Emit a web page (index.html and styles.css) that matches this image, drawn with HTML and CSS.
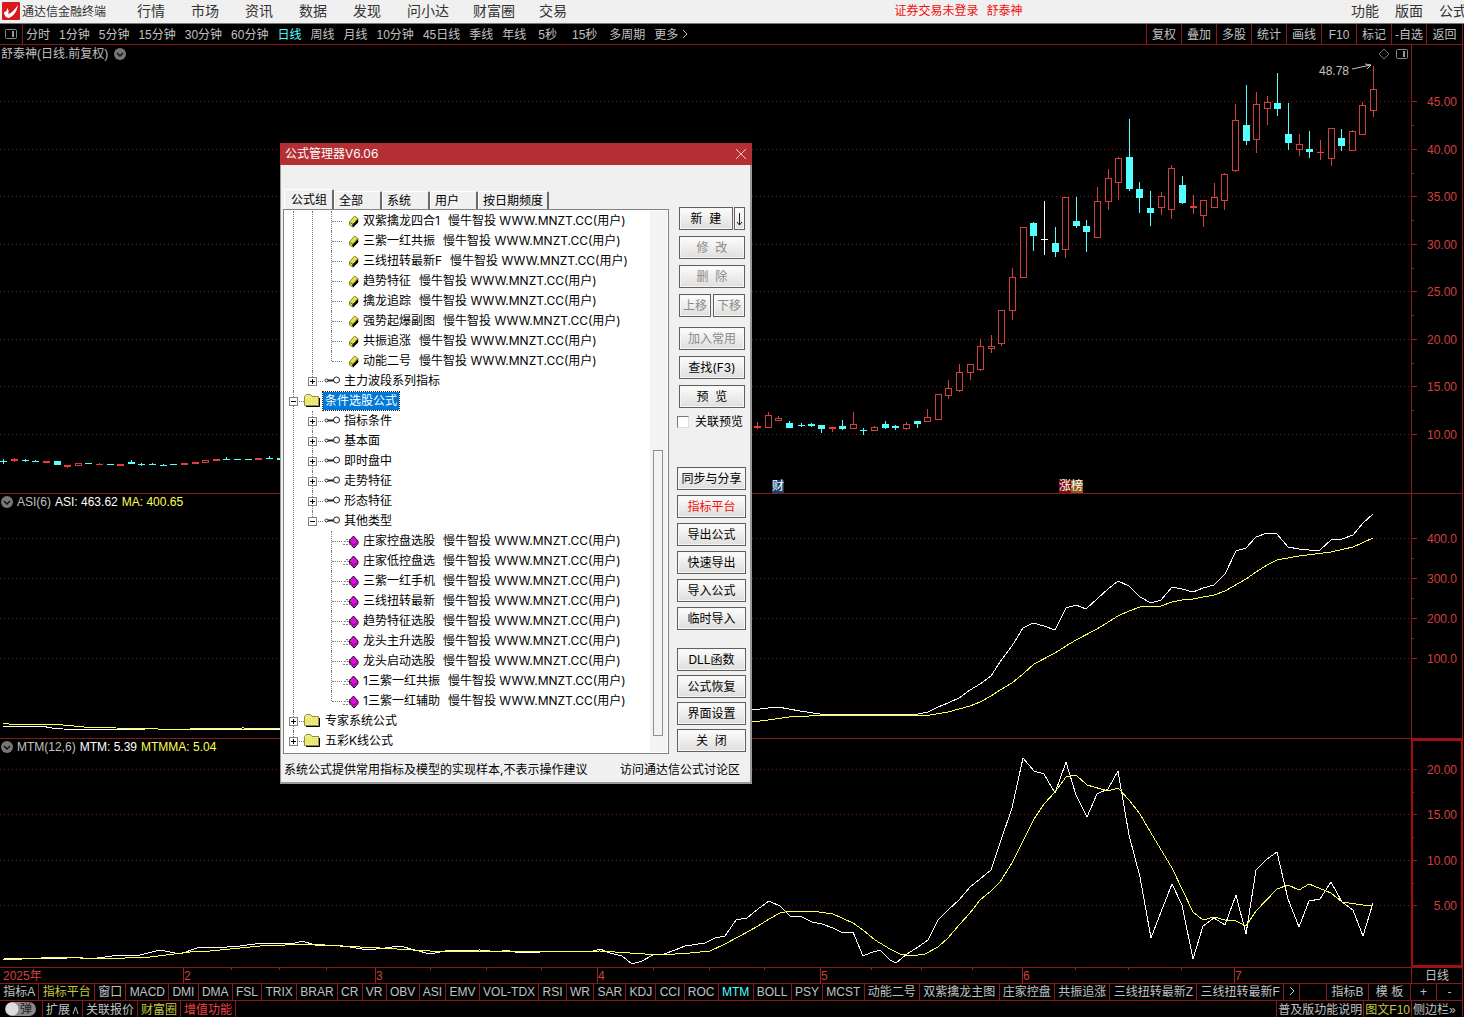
FILE: index.html
```html
<!DOCTYPE html>
<html lang="zh-CN">
<head>
  <meta charset="UTF-8">
  <meta name="viewport" content="width=device-width, initial-scale=1.0">
  <title>通达信金融终端</title>
  <link rel="stylesheet" href="styles.css">
</head>
<body>
  <svg class="symbols">
    <symbol id="i-book" viewBox="0 0 18 16">
      <path d="M7.500 9l5-6 3.500 2.500v3.500l-5 5-3.500-2z" fill="#e6e24c" stroke="#8a872f"/>
      <path d="M16 6v3.500l-5 5-1-3z" fill="#000"/>
      <path d="M8 9.500l3 2 4.500-5.500" fill="none" stroke="#6d6a20"/>
    </symbol>
    <symbol id="i-gem" viewBox="0 0 18 16">
      <path d="M4 6.500h4M2 8.500h5M1 11.500h7" stroke="#888" stroke-dasharray="2 1"/>
      <path d="M7.500 7.500l4-4.500 4.500 5v2.500l-4 4.500-4.500-5z" fill="#d413d4" stroke="#220022"/>
      <path d="M8 9l4 3 4-3" stroke="#7d087d" fill="none"/>
    </symbol>
    <symbol id="i-key" viewBox="0 0 18 16">
      <path d="M4 7.500h8" stroke="#222" stroke-width="2"/>
      <circle cx="3.500" cy="7.500" r="1.500" fill="#fff" stroke="#222"/>
      <circle cx="13.500" cy="7" r="3" fill="#fff" stroke="#222"/>
    </symbol>
    <symbol id="i-folder" viewBox="0 0 18 16">
      <path d="M2 13.500h13.500V5" stroke="#000" fill="none"/>
      <path d="M.5 12.500v-9l2-2h4l1.500 2h6.500v9z" fill="#efec84" stroke="#8f8d3f"/>
      <path d="M2 6h12M2 8h12M2 10h12" stroke="#dcd84c" stroke-dasharray="1 1"/>
    </symbol>
    <symbol id="i-chevron" viewBox="0 0 12 12">
      <circle cx="6" cy="6" r="6" fill="#777"/>
      <path d="M3 5l3 3 3-3" fill="none" stroke="#111" stroke-width="1.500"/>
    </symbol>
    <symbol id="i-panel" viewBox="0 0 12 12">
      <rect x=".5" y="1.500" width="11" height="9" rx="1" fill="none" stroke="#888"/>
      <path d="M8 3v6" stroke="#999" stroke-width="2"/>
    </symbol>
  </svg>

  <header class="menubar">
    <svg class="logo" viewBox="0 0 18 18">
      <rect width="18" height="18" rx="1" fill="#d5191d"/>
      <path d="M2 10c2 0 3-1 3-4 2 2 2 4 1 6 4-1 6-4 10-9-1 6-4 11-9 13-3 0-5-3-5-6z" fill="#fff"/>
    </svg>
    <h1>通达信金融终端</h1>
    <nav class="menu">
      <a href="#">行情</a>
      <a href="#">市场</a>
      <a href="#">资讯</a>
      <a href="#">数据</a>
      <a href="#">发现</a>
      <a href="#">问小达</a>
      <a href="#">财富圈</a>
      <a href="#">交易</a>
    </nav>
    <div class="login"><span>证券交易未登录</span><span>舒泰神</span></div>
    <nav class="menu-right">
      <a href="#">功能</a>
      <a href="#">版面</a>
      <a href="#">公式</a>
    </nav>
  </header>

  <div class="toolbar">
    <button class="side-toggle" aria-label="侧栏"><svg width="12" height="12"><use href="#i-panel"/></svg></button>
    <div class="periods">
      <button>分时</button>
      <button>1分钟</button>
      <button>5分钟</button>
      <button>15分钟</button>
      <button>30分钟</button>
      <button>60分钟</button>
      <button class="active">日线</button>
      <button>周线</button>
      <button>月线</button>
      <button>10分钟</button>
      <button>45日线</button>
      <button>季线</button>
      <button>年线</button>
      <button class="seconds">5秒</button>
      <button class="seconds">15秒</button>
      <button>多周期</button>
      <button>更多<svg class="more" viewBox="0 0 6 10"><path d="M1 1l4 4-4 4" fill="none" stroke="#c0c0c0"/></svg></button>
    </div>
    <div class="tools">
      <button>复权</button>
      <button>叠加</button>
      <button>多股</button>
      <button>统计</button>
      <button>画线</button>
      <button>F10</button>
      <button>标记</button>
      <button>-自选</button>
      <button>返回</button>
    </div>
  </div>

  <main class="workspace">
    <section class="panel">
      <div class="plot">
        <svg id="priceChart" class="chart" viewBox="0 45 1411 448" preserveAspectRatio="none"></svg>
        <div class="legend">舒泰神(日线.前复权)<svg width="12" height="12"><use href="#i-chevron"/></svg></div>
        <div class="plot-tools">
          <svg width="12" height="12" viewBox="0 0 12 12"><path d="M6 1l5 5-5 5-5-5z" fill="none" stroke="#777"/></svg>
          <svg width="12" height="12"><use href="#i-panel"/></svg>
        </div>
        <div class="high-mark">48.78<svg width="22" height="10" viewBox="0 0 22 10"><path d="M1 6l19-4M14 1l6 1-4 4" fill="none" stroke="#c0c0c0"/></svg></div>
        <span class="badge news">财</span>
        <span class="badge rank"><b>涨</b><i>榜</i></span>
      </div>
      <svg id="priceAxis" class="axis" viewBox="0 45 50 448" preserveAspectRatio="none"></svg>
    </section>

    <section class="panel divided">
      <div class="plot">
        <svg id="asiChart" class="chart" viewBox="0 494 1411 244" preserveAspectRatio="none"></svg>
        <div class="legend sub"><svg width="12" height="12"><use href="#i-chevron"/></svg><span>ASI(6)</span><span class="white">ASI: 463.62</span><span class="yellow">MA: 400.65</span></div>
      </div>
      <svg id="asiAxis" class="axis" viewBox="0 494 50 244" preserveAspectRatio="none"></svg>
    </section>

    <section class="panel divided selected">
      <div class="plot">
        <svg id="mtmChart" class="chart" viewBox="0 739 1411 228" preserveAspectRatio="none"></svg>
        <div class="legend sub"><svg width="12" height="12"><use href="#i-chevron"/></svg><span>MTM(12,6)</span><span class="white">MTM: 5.39</span><span class="yellow">MTMMA: 5.04</span></div>
      </div>
      <svg id="mtmAxis" class="axis" viewBox="0 739 50 228" preserveAspectRatio="none"></svg>
    </section>

    <div class="dates">
      <svg id="dateAxis" class="chart" viewBox="0 968 1411 15" preserveAspectRatio="none"></svg>
      <span class="period">日线</span>
    </div>

    <div class="indicators">
      <div class="tabs">
        <button>指标A</button>
        <button class="yellow">指标平台</button>
        <button>窗口</button>
        <button>MACD</button>
        <button>DMI</button>
        <button>DMA</button>
        <button>FSL</button>
        <button>TRIX</button>
        <button>BRAR</button>
        <button>CR</button>
        <button>VR</button>
        <button>OBV</button>
        <button>ASI</button>
        <button>EMV</button>
        <button>VOL-TDX</button>
        <button>RSI</button>
        <button>WR</button>
        <button>SAR</button>
        <button>KDJ</button>
        <button>CCI</button>
        <button>ROC</button>
        <button class="active">MTM</button>
        <button>BOLL</button>
        <button>PSY</button>
        <button>MCST</button>
        <button>动能二号</button>
        <button>双紫擒龙主图</button>
        <button>庄家控盘</button>
        <button>共振追涨</button>
        <button>三线扭转最新Z</button>
        <button>三线扭转最新F</button>
      </div>
      <button class="next" aria-label="更多指标"><svg class="more" viewBox="0 0 6 10"><path d="M1 1l4 4-4 4" fill="none" stroke="#c0c0c0"/></svg></button>
      <span class="blank"></span>
      <button class="wide">指标B</button>
      <button class="wide">模 板</button>
      <button class="zoom">+</button>
      <button class="zoom">-</button>
    </div>
  </main>

  <footer class="statusbar">
    <label class="popup-toggle"><input type="checkbox"><span>弹</span></label>
    <button>扩展<svg class="caret" viewBox="0 0 7 8"><path d="M1 8l2.500-7L6 8" fill="none" stroke="#c0c0c0"/></svg></button>
    <button>关联报价</button>
    <button class="yellow">财富圈</button>
    <button class="red">增值功能</button>
    <span class="spacer"></span>
    <button class="help">普及版功能说明</button>
    <button class="yellow f10">图文F10</button>
    <button class="sidebar">侧边栏»</button>
  </footer>

  <div class="dialog" role="dialog" aria-labelledby="dialogTitle">
    <div class="dialog-title">
      <span id="dialogTitle">公式管理器V6.06</span>
      <button aria-label="关闭窗口"><svg width="10" height="10" viewBox="0 0 10 10"><path d="M0 0l10 10M10 0L0 10" stroke="#f3c9ca"/></svg></button>
    </div>
    <div class="dialog-body">
      <div class="browser">
        <div class="group-tabs" role="tablist">
          <button role="tab" class="current">公式组</button>
          <button role="tab">全部</button>
          <button role="tab">系统</button>
          <button role="tab">用户</button>
          <button role="tab">按日期频度</button>
        </div>
        <div class="tree-box">
          <ul class="tree">
            <li>
              <ul>
                <li>
                  <ul>
                    <li><div class="row leaf"><svg><use href="#i-book"/></svg><span>双紫擒龙四合1</span>慢牛智投 WWW.MNZT.CC(用户)</div></li>
                    <li><div class="row leaf"><svg><use href="#i-book"/></svg><span>三紫一红共振</span>慢牛智投 WWW.MNZT.CC(用户)</div></li>
                    <li><div class="row leaf"><svg><use href="#i-book"/></svg><span>三线扭转最新F</span>慢牛智投 WWW.MNZT.CC(用户)</div></li>
                    <li><div class="row leaf"><svg><use href="#i-book"/></svg><span>趋势特征</span>慢牛智投 WWW.MNZT.CC(用户)</div></li>
                    <li><div class="row leaf"><svg><use href="#i-book"/></svg><span>擒龙追踪</span>慢牛智投 WWW.MNZT.CC(用户)</div></li>
                    <li><div class="row leaf"><svg><use href="#i-book"/></svg><span>强势起爆副图</span>慢牛智投 WWW.MNZT.CC(用户)</div></li>
                    <li><div class="row leaf"><svg><use href="#i-book"/></svg><span>共振追涨</span>慢牛智投 WWW.MNZT.CC(用户)</div></li>
                    <li><div class="row leaf"><svg><use href="#i-book"/></svg><span>动能二号</span>慢牛智投 WWW.MNZT.CC(用户)</div></li>
                  </ul>
                </li>
                <li><div class="row"><button class="node" aria-label="展开"></button><svg><use href="#i-key"/></svg><span>主力波段系列指标</span></div></li>
              </ul>
            </li>
            <li>
              <div class="row"><button class="node open" aria-label="折叠"></button><svg><use href="#i-folder"/></svg><span class="picked">条件选股公式</span></div>
              <ul>
                <li><div class="row"><button class="node" aria-label="展开"></button><svg><use href="#i-key"/></svg><span>指标条件</span></div></li>
                <li><div class="row"><button class="node" aria-label="展开"></button><svg><use href="#i-key"/></svg><span>基本面</span></div></li>
                <li><div class="row"><button class="node" aria-label="展开"></button><svg><use href="#i-key"/></svg><span>即时盘中</span></div></li>
                <li><div class="row"><button class="node" aria-label="展开"></button><svg><use href="#i-key"/></svg><span>走势特征</span></div></li>
                <li><div class="row"><button class="node" aria-label="展开"></button><svg><use href="#i-key"/></svg><span>形态特征</span></div></li>
                <li>
                  <div class="row"><button class="node open" aria-label="折叠"></button><svg><use href="#i-key"/></svg><span>其他类型</span></div>
                  <ul>
                    <li><div class="row leaf"><svg><use href="#i-gem"/></svg><span>庄家控盘选股</span>慢牛智投 WWW.MNZT.CC(用户)</div></li>
                    <li><div class="row leaf"><svg><use href="#i-gem"/></svg><span>庄家低控盘选</span>慢牛智投 WWW.MNZT.CC(用户)</div></li>
                    <li><div class="row leaf"><svg><use href="#i-gem"/></svg><span>三紫一红手机</span>慢牛智投 WWW.MNZT.CC(用户)</div></li>
                    <li><div class="row leaf"><svg><use href="#i-gem"/></svg><span>三线扭转最新</span>慢牛智投 WWW.MNZT.CC(用户)</div></li>
                    <li><div class="row leaf"><svg><use href="#i-gem"/></svg><span>趋势特征选股</span>慢牛智投 WWW.MNZT.CC(用户)</div></li>
                    <li><div class="row leaf"><svg><use href="#i-gem"/></svg><span>龙头主升选股</span>慢牛智投 WWW.MNZT.CC(用户)</div></li>
                    <li><div class="row leaf"><svg><use href="#i-gem"/></svg><span>龙头启动选股</span>慢牛智投 WWW.MNZT.CC(用户)</div></li>
                    <li><div class="row leaf"><svg><use href="#i-gem"/></svg><span>1三紫一红共振</span>慢牛智投 WWW.MNZT.CC(用户)</div></li>
                    <li><div class="row leaf"><svg><use href="#i-gem"/></svg><span>1三紫一红辅助</span>慢牛智投 WWW.MNZT.CC(用户)</div></li>
                  </ul>
                </li>
              </ul>
            </li>
            <li><div class="row"><button class="node" aria-label="展开"></button><svg><use href="#i-folder"/></svg><span>专家系统公式</span></div></li>
            <li><div class="row"><button class="node" aria-label="展开"></button><svg><use href="#i-folder"/></svg><span>五彩K线公式</span></div></li>
          </ul>
          <div class="scrollbar"><div class="thumb"></div></div>
        </div>
      </div>

      <div class="actions">
        <div class="group edit">
          <div class="pair"><button class="grow">新&nbsp; 建</button><button class="drop" aria-label="新建选项"><svg width="7" height="14" viewBox="0 0 7 14"><path d="M3.500 1v12M1 10l2.500 3L6 10" fill="none" stroke="#222"/></svg></button></div>
          <button disabled>修&nbsp; 改</button>
          <button disabled>删&nbsp; 除</button>
          <div class="pair move"><button class="grow" disabled>上移</button><button class="grow" disabled>下移</button></div>
        </div>
        <div class="group find">
          <button disabled>加入常用</button>
          <button>查找(F3)</button>
          <button>预&nbsp; 览</button>
        </div>
        <label class="link-preview"><input type="checkbox">关联预览</label>
        <div class="group share">
          <button>同步与分享</button>
          <button class="hot">指标平台</button>
          <button>导出公式</button>
          <button>快速导出</button>
          <button>导入公式</button>
          <button>临时导入</button>
        </div>
        <div class="group system">
          <button>DLL函数</button>
          <button>公式恢复</button>
          <button>界面设置</button>
          <button>关&nbsp; 闭</button>
        </div>
      </div>
    </div>
    <div class="dialog-foot">
      <span>系统公式提供常用指标及模型的实现样本,不表示操作建议</span>
      <a href="#">访问通达信公式讨论区</a>
    </div>
  </div>

  <script src="charts.js"></script>
</body>
</html>
```
FILE: styles.css
```css
:root {
  --line: #8a1818;
  --text: #c0c0c0;
  --red: #d0403e;
  --cyan: #54ffff;
  --yellow: #ffff54;
  --face: #f0f0f0;
}

* {
  box-sizing: border-box;
  margin: 0;
  padding: 0;
}

body {
  display: flex;
  flex-direction: column;
  height: 100vh;
  overflow: hidden;
  background: #000;
  color: var(--text);
  font-family: "Liberation Sans", "Noto Sans CJK SC", sans-serif;
  font-size: 12px;
  line-height: 16px;
}

button {
  border: none;
  background: none;
  color: inherit;
  font: inherit;
  white-space: nowrap;
}

a {
  color: inherit;
  text-decoration: none;
}

svg {
  flex: none;
}

.symbols {
  position: absolute;
  width: 0;
  height: 0;
}

.white {
  color: #fff;
}

.yellow {
  color: var(--yellow);
}

/* menu bar */

.menubar {
  display: flex;
  align-items: center;
  flex: none;
  height: 24px;
  padding-left: 2px;
  overflow: hidden;
  border-bottom: 1px solid #777;
  background: var(--face);
  color: #333;
  white-space: nowrap;
}

.logo {
  width: 18px;
  height: 18px;
  margin: 0 2px 2px 0;
}

.menubar h1 {
  font-size: 12px;
  font-weight: 400;
}

.menu {
  display: flex;
  margin-left: 31px;
  padding-bottom: 2px;
  font-size: 14px;
}

.menu a {
  min-width: 54px;
  padding-right: 24px;
}

.login {
  display: flex;
  gap: 8px;
  margin: 0 auto;
  padding: 0 27px 2px 0;
  color: #f01010;
}

.menu-right {
  display: flex;
  gap: 16px;
  margin-right: -3px;
  padding-bottom: 2px;
  font-size: 14px;
}

/* period toolbar */

.toolbar {
  display: flex;
  flex: none;
  height: 21px;
  margin-right: 1px;
  border-bottom: 1px solid var(--line);
}

.toolbar button {
  padding-top: 1px;
}

.toolbar .side-toggle {
  width: 23px;
  padding: 4px 4px 0;
  border-right: 1px solid var(--line);
}

.periods {
  display: flex;
  flex: 1;
  gap: 9px;
  padding-left: 3px;
}

.periods .active,
.tabs .active {
  color: var(--cyan);
}

.periods .seconds {
  padding: 1px 3px 0;
}

.more {
  width: 6px;
  height: 10px;
  margin-left: 4px;
}

.tools {
  display: flex;
}

.tools button {
  width: 35px;
  border-left: 1px solid var(--line);
}

.tools button:last-child {
  width: 37px;
  border-right: 1px solid var(--line);
}

/* chart area */

.workspace {
  display: grid;
  grid-template-rows: 448fr 245fr 229fr 16px 17px;
  flex: 1;
  min-height: 0;
  margin-right: 1px;
}

.panel {
  display: flex;
  min-height: 0;
}

.divided {
  border-top: 1px solid var(--line);
}

.plot {
  position: relative;
  flex: 1;
  min-width: 0;
}

.chart {
  display: block;
  width: 100%;
  height: 100%;
}

.axis {
  box-sizing: content-box;
  width: 50px;
  height: 100%;
  border-left: 1px solid var(--line);
  border-right: 1px solid var(--line);
}

.selected .axis {
  outline: 2px solid #a80c10;
  outline-offset: -2px;
}

.chart line,
.chart path,
.chart rect,
.axis line {
  shape-rendering: crispEdges;
}

.grid {
  stroke: #7a1a1a;
  stroke-dasharray: 1 3;
}

.tick {
  stroke: #a02020;
}

.axis text,
.chart text {
  fill: var(--red);
  font-size: 12px;
}

.curve {
  fill: none;
}

.curve.main {
  stroke: #fff;
}

.curve.average {
  stroke: var(--yellow);
}

.up {
  fill: #000;
  stroke: var(--red);
}

.flat-up {
  fill: #e83c3a;
  stroke: #e83c3a;
}

.down {
  fill: var(--cyan);
  stroke: var(--cyan);
}

.even {
  fill: #fff;
  stroke: #fff;
}

.legend {
  display: flex;
  align-items: center;
  gap: 6px;
  position: absolute;
  top: 1px;
  left: 1px;
}

.legend.sub {
  top: 0;
  gap: 4px;
}

.plot-tools {
  display: flex;
  gap: 6px;
  position: absolute;
  top: 3px;
  right: 3px;
}

.high-mark {
  display: flex;
  gap: 2px;
  position: absolute;
  top: 18px;
  right: 38px;
}

.badge {
  display: flex;
  position: absolute;
  bottom: 0;
  color: #fff;
  line-height: 13px;
}

.news {
  right: 627px;
  background: #17406e;
}

.rank {
  right: 328px;
  background: #8a5a18;
}

.rank b,
.rank i {
  font-weight: 400;
  font-style: normal;
}

.rank b {
  background: #7c0c0c;
}

.dates {
  display: flex;
  border-top: 1px solid var(--line);
}

.dates .chart {
  flex: 1;
  width: auto;
  min-width: 0;
}

.period {
  width: 52px;
  border-left: 1px solid var(--line);
  border-right: 1px solid var(--line);
  text-align: center;
}

.indicators {
  display: flex;
  border-top: 1px solid var(--line);
}

.tabs {
  display: flex;
  flex: 1;
  min-width: 0;
}

.indicators button,
.blank {
  border-right: 1px solid var(--line);
}

.tabs button {
  flex: 1 0 auto;
  padding: 0 3px;
}

.next {
  width: 16px;
}

.next .more {
  margin: 0;
}

.blank {
  width: 27px;
}

.wide {
  width: 42px;
}

.zoom {
  width: 26px;
}

.tabs .yellow,
.statusbar .yellow {
  color: #c8c83c;
}

/* status bar */

.statusbar {
  display: flex;
  flex: none;
  height: 17px;
  margin-right: 1px;
  border-top: 1px solid var(--line);
}

.statusbar button {
  padding: 1px 3px 0;
  border-right: 1px solid var(--line);
}

.caret {
  width: 7px;
  height: 8px;
  margin-left: 2px;
}

.statusbar .red {
  color: #f04040;
}

.popup-toggle {
  width: 43px;
  padding: 1px 0 0 5px;
  border-right: 1px solid var(--line);
}

.popup-toggle input {
  position: absolute;
  opacity: 0;
}

.popup-toggle span {
  display: block;
  width: 31px;
  height: 14px;
  padding-right: 4px;
  border-radius: 7px;
  background: radial-gradient(circle at 7px 7px, #ddd 6px, #888 7px);
  color: #222;
  line-height: 14px;
  text-align: right;
}

.spacer {
  flex: 1;
}

.statusbar .help {
  padding: 1px 1px 0;
  border-left: 1px solid var(--line);
}

.statusbar .f10 {
  padding: 1px 1px 0;
}

.statusbar .sidebar {
  width: 51px;
  padding: 1px 1px 0;
  text-align: left;
}

/* formula manager window */

.dialog {
  position: absolute;
  top: 143px;
  left: 280px;
  width: 472px;
  border: solid #999;
  border-width: 0 2px 2px 1px;
  background: var(--face);
  color: #000;
  font-family: Inter, "Noto Sans CJK SC", sans-serif;
}

.dialog-title {
  display: flex;
  justify-content: space-between;
  align-items: center;
  height: 22px;
  margin: 0 -2px 0 -1px;
  padding: 0 6px 0 5px;
  background: #b42f33;
  color: #fff;
}

.dialog-title button {
  display: flex;
}

.dialog-body {
  display: flex;
  justify-content: space-between;
  padding: 24px 4px 0 2px;
}

.browser {
  width: 386px;
}

.group-tabs {
  display: flex;
  align-items: flex-end;
  height: 20px;
  padding-left: 1px;
}

.group-tabs button {
  min-width: 48px;
  height: 18px;
  padding: 1px 4px 0;
  border: solid #fff;
  border-width: 1px 0 0 1px;
  border-right: 2px solid #6a6a6a;
  border-radius: 2px 2px 0 0;
  line-height: 16px;
  text-align: left;
}

.group-tabs .current {
  height: 20px;
  padding: 1px 5px 0 6px;
}

.tree-box {
  display: flex;
  justify-content: space-between;
  height: 545px;
  padding: 1px;
  border: 1px solid #828282;
  background: #fff;
}

.tree,
.tree ul {
  list-style: none;
}

.tree ul {
  padding-left: 19px;
}

.tree {
  margin-left: -1px;
}

.tree li {
  position: relative;
}

.tree li::before {
  content: "";
  position: absolute;
  top: 0;
  bottom: 0;
  left: 9px;
  border-left: 1px dotted #777;
}

.tree li:last-child::before {
  bottom: auto;
  height: 10px;
}

.row {
  display: flex;
  align-items: center;
  position: relative;
  height: 20px;
  padding-left: 5px;
  white-space: nowrap;
}

.row::before {
  content: "";
  position: absolute;
  top: 10px;
  left: 10px;
  width: 10px;
  border-top: 1px dotted #777;
}

.row svg {
  width: 18px;
  height: 16px;
  margin: 0 1px 0 6px;
}

.row.leaf svg {
  margin-left: 15px;
}

.row span {
  padding: 0 2px;
  line-height: 18px;
}

.row.leaf span {
  margin-right: 6px;
}

.row .picked {
  outline: 1px dotted #222;
  background: #0078d7;
  color: #fff;
}

.node {
  position: relative;
  width: 9px;
  height: 9px;
  border: 1px solid #828282;
  background:
    linear-gradient(#000, #000) center / 5px 1px no-repeat,
    linear-gradient(#000, #000) center / 1px 5px no-repeat,
    #fff;
}

.node.open {
  background: linear-gradient(#000, #000) center / 5px 1px no-repeat, #fff;
}

.scrollbar {
  width: 17px;
  padding: 239px 4px 0 3px;
  background: #f4f3f2;
}

.thumb {
  height: 286px;
  border: 1px solid #909090;
}

.actions {
  width: 69px;
  padding-top: 18px;
}

.group {
  display: flex;
  flex-direction: column;
  gap: 6px;
}

.edit,
.find {
  margin: 0 1px 10px 2px;
}

.group button {
  height: 23px;
  border: 1px solid #606060;
  background: linear-gradient(#fdfdfd, #dfdedb);
  box-shadow: inset 0 0 0 1px #f6f6f6;
  line-height: 20px;
}

.group button:disabled {
  color: #8a8a8a;
}

.pair {
  display: flex;
  gap: 1px;
}

.pair.move {
  gap: 2px;
}

.grow {
  flex: 1;
}

.group .drop {
  display: flex;
  align-items: center;
  justify-content: center;
  width: 11px;
}

.find {
  margin-bottom: 6px;
}

.link-preview {
  display: flex;
  align-items: center;
  gap: 6px;
  white-space: nowrap;
}

.link-preview input {
  appearance: none;
  width: 12px;
  height: 12px;
  border: 1px solid #777;
  border-right-color: #ddd;
  border-bottom-color: #ddd;
  background: #fff;
}

.share {
  gap: 5px;
  margin-top: 37px;
}

.group .hot {
  color: #f01010;
}

.system {
  gap: 4px;
  margin-top: 18px;
}

.dialog-foot {
  display: flex;
  justify-content: space-between;
  padding: 8px 10px 4px 3px;
}
```
FILE: charts.js
```js
const SVG_NS = 'http://www.w3.org/2000/svg';

// kind, x, high, body top, body bottom, low
const candles = [
  ['down', 3, 459, 461, 461, 464], ['flat-up', 14, 458, 459, 460, 462], ['down', 25, 459, 460, 460, 462],
  ['down', 35, 460, 461, 461, 461], ['flat-up', 46, 461, 461, 462, 462], ['down', 57, 461, 461, 464, 464],
  ['flat-up', 67, 465, 465, 466, 468], ['up', 78, 463, 463, 465, 465], ['down', 88, 463, 463, 463, 463],
  ['flat-up', 99, 463, 464, 464, 464], ['down', 110, 464, 464, 464, 464], ['flat-up', 120, 464, 464, 465, 465],
  ['down', 131, 460, 462, 463, 463], ['down', 141, 463, 464, 464, 466], ['down', 152, 463, 464, 464, 464],
  ['down', 163, 464, 465, 465, 465], ['down', 173, 464, 464, 464, 464], ['flat-up', 184, 463, 463, 464, 464],
  ['flat-up', 195, 462, 462, 463, 463], ['up', 205, 460, 460, 462, 462], ['flat-up', 216, 459, 459, 460, 460],
  ['down', 226, 457, 459, 459, 459], ['down', 237, 459, 459, 459, 459], ['down', 248, 459, 459, 459, 459],
  ['flat-up', 258, 458, 458, 459, 459], ['down', 269, 456, 458, 458, 458], ['down', 280, 458, 458, 459, 459],
  ['flat-up', 757, 422, 426, 427, 429], ['up', 768, 412, 415, 427, 427], ['up', 778, 416, 418, 420, 420],
  ['down', 789, 421, 423, 427, 427], ['down', 801, 423, 425, 425, 427], ['down', 811, 423, 424, 425, 427],
  ['down', 821, 425, 425, 428, 433], ['flat-up', 832, 427, 427, 428, 432], ['down', 842, 420, 426, 428, 430],
  ['up', 853, 412, 424, 428, 428], ['down', 863, 428, 430, 430, 435], ['up', 874, 426, 427, 430, 430],
  ['down', 885, 421, 424, 427, 429], ['down', 895, 425, 426, 427, 430], ['up', 906, 422, 424, 428, 430],
  ['down', 917, 421, 421, 423, 428], ['up', 927, 409, 417, 421, 421], ['up', 938, 394, 394, 419, 419],
  ['up', 948, 380, 388, 395, 399], ['up', 959, 364, 372, 390, 392], ['up', 970, 364, 364, 372, 380],
  ['up', 980, 339, 346, 369, 371], ['up', 991, 335, 346, 348, 353], ['up', 1001, 310, 310, 343, 346],
  ['up', 1012, 268, 277, 310, 320], ['up', 1023, 227, 227, 277, 277], ['down', 1033, 222, 223, 235, 251],
  ['even', 1044, 201, 239, 239, 255], ['down', 1055, 227, 243, 251, 257], ['up', 1065, 197, 197, 249, 258],
  ['down', 1076, 197, 221, 225, 228], ['down', 1086, 220, 226, 231, 252], ['up', 1097, 187, 201, 237, 237],
  ['up', 1108, 169, 178, 201, 210], ['up', 1118, 157, 158, 182, 200], ['down', 1129, 119, 157, 188, 191],
  ['down', 1139, 182, 189, 197, 213], ['down', 1150, 191, 208, 212, 226], ['up', 1161, 192, 196, 207, 215],
  ['up', 1171, 165, 168, 209, 219], ['down', 1182, 176, 185, 202, 204], ['flat-up', 1193, 195, 206, 207, 214],
  ['up', 1203, 200, 200, 215, 227], ['up', 1214, 183, 197, 207, 207], ['up', 1224, 173, 174, 200, 210],
  ['up', 1235, 104, 120, 170, 172], ['down', 1246, 85, 125, 140, 145], ['up', 1256, 92, 104, 139, 153],
  ['up', 1267, 96, 102, 108, 125], ['down', 1277, 73, 103, 108, 116], ['down', 1288, 103, 134, 142, 150],
  ['up', 1299, 134, 144, 149, 156], ['down', 1309, 131, 149, 151, 158], ['flat-up', 1320, 140, 152, 152, 160],
  ['up', 1331, 128, 128, 158, 166], ['down', 1341, 129, 138, 145, 151], ['up', 1352, 130, 131, 150, 150],
  ['up', 1362, 102, 105, 134, 134], ['up', 1373, 66, 89, 110, 117]
];

const asi = '3,727 10,726 41,726 52,728 63,729 145,730 190,730 210,729 280,729 640,729 700,724 752,710 768,708 778,707 789,709 800,711 820,714 918,714 928,712 938,707 948,703 959,698 970,690 980,684 991,676 1000,662 1012,646 1023,628 1033,623 1044,626 1055,630 1066,608 1076,605 1086,609 1097,599 1108,589 1118,581 1129,586 1140,597 1151,603 1161,600 1172,587 1182,589 1193,592 1203,588 1214,585 1225,574 1236,551 1246,548 1256,537 1267,533 1277,534 1288,547 1299,549 1309,550 1320,550 1331,540 1342,539 1353,535 1363,523 1373,514';
const asiMa = '3,723 9,724 41,724 63,725 84,727 116,728 158,729 190,729 243,728 280,729 640,729 700,728 752,722 768,720 789,717 830,715 930,715 948,712 959,709 970,706 980,702 991,696 1000,690 1012,683 1023,674 1034,664 1055,653 1066,646 1076,640 1097,629 1118,616 1129,611 1140,607 1161,606 1172,602 1182,600 1193,599 1214,595 1225,591 1246,579 1256,572 1267,565 1277,560 1299,556 1331,552 1353,547 1373,538';
const mtm = '3,958 60,959 75,957 90,959 120,955 140,955 160,950 180,954 200,947 215,948 240,946 255,944 280,943 292,944 302,941 315,945 335,945 350,947 368,950 385,948 400,946 430,954 445,951 480,950 500,952 505,950 520,953 560,951 590,952 600,949 610,953 622,956 632,964 642,961 653,955 664,954 675,950 685,946 705,943 715,938 725,936 736,920 747,918 758,909 769,901 780,906 790,916 800,916 812,922 822,924 833,928 843,933 853,932 863,956 870,953 880,950 890,960 896,963 907,954 918,947 928,940 938,920 948,910 959,900 970,887 980,879 991,870 1000,843 1012,808 1023,758 1034,771 1044,774 1055,793 1066,762 1076,795 1087,817 1097,794 1108,789 1118,771 1129,835 1140,877 1151,938 1161,912 1172,884 1182,905 1193,959 1203,926 1214,918 1225,925 1236,895 1246,934 1256,870 1267,859 1277,852 1288,899 1299,927 1309,901 1320,899 1331,882 1342,902 1353,910 1363,936 1373,903';
const mtmMa = '3,960 60,957 100,959 150,957 190,952 210,951 260,946 310,944 340,946 380,948 430,951 480,951 540,952 600,951 660,955 690,953 710,951 725,944 740,936 758,926 769,919 780,913 790,911 812,911 833,914 853,923 863,930 875,940 890,949 900,954 912,956 925,954 938,947 948,938 959,925 970,913 980,900 991,891 1000,882 1012,863 1023,841 1034,819 1044,804 1055,792 1066,777 1076,775 1087,785 1108,791 1118,788 1129,800 1140,814 1151,833 1172,868 1193,912 1203,920 1214,917 1225,920 1236,921 1246,926 1256,911 1277,889 1288,885 1299,890 1309,884 1331,893 1342,902 1363,905 1373,905';

const priceLevels = [[101, '45.00'], [149, '40.00'], [196, '35.00'], [244, '30.00'], [291, '25.00'], [339, '20.00'], [386, '15.00'], [434, '10.00']];
const asiLevels = [[538, '400.0'], [578, '300.0'], [618, '200.0'], [658, '100.0']];
const mtmLevels = [[769, '20.00'], [814, '15.00'], [860, '10.00'], [905, '5.00']];

const months = [[183, '2'], [375, '3'], [597, '4'], [820, '5'], [1022, '6'], [1234, '7']];
const weeks = [231, 279, 326, 430, 486, 541, 653, 709, 764, 871, 921, 972, 1075, 1128, 1181];

function add(parent, tag, attrs, text) {
  const el = document.createElementNS(SVG_NS, tag);
  for (const key in attrs) {
    el.setAttribute(key, attrs[key]);
  }
  if (text) el.textContent = text;
  parent.appendChild(el);
}

function hline(parent, x1, x2, y, cls) {
  add(parent, 'line', { x1: x1, x2: x2, y1: y + 0.5, y2: y + 0.5, class: cls });
}

function drawScale(name, levels) {
  const chart = document.getElementById(name + 'Chart');
  const axis = document.getElementById(name + 'Axis');
  levels.forEach(([y, label], i) => {
    hline(chart, 0, 1411, y, 'grid');
    hline(axis, 0, 5, y, 'tick');
    if (i < levels.length - 1) {
      hline(axis, 0, 2, Math.round((y + levels[i + 1][0]) / 2), 'tick');
    }
    add(axis, 'text', { x: 45, y: y + 5, 'text-anchor': 'end' }, label);
  });
}

function drawCurve(name, points, cls) {
  add(document.getElementById(name + 'Chart'), 'path', { d: 'M' + points, class: 'curve ' + cls });
}

function drawCandles() {
  const chart = document.getElementById('priceChart');
  candles.forEach(([kind, x, high, top, bottom, low]) => {
    const cx = x + 0.5;
    if (high < top) {
      add(chart, 'line', { x1: cx, x2: cx, y1: high, y2: top, class: kind });
    }
    if (low > bottom) {
      add(chart, 'line', { x1: cx, x2: cx, y1: bottom + 1, y2: low, class: kind });
    }
    if (top === bottom) {
      hline(chart, x - 3, x + 4, top, kind);
    } else {
      add(chart, 'rect', { x: x - 2.5, y: top + 0.5, width: 6, height: bottom - top, class: kind });
    }
  });
}

function drawDates() {
  const axis = document.getElementById('dateAxis');
  add(axis, 'text', { x: 3, y: 980 }, '2025年');
  months.forEach(([x, label]) => {
    add(axis, 'line', { x1: x + 0.5, x2: x + 0.5, y1: 968, y2: 983, class: 'tick' });
    add(axis, 'text', { x: x + 1, y: 980 }, label);
  });
  weeks.forEach(x => add(axis, 'line', { x1: x + 0.5, x2: x + 0.5, y1: 968, y2: 970, class: 'tick' }));
}

drawScale('price', priceLevels);
drawScale('asi', asiLevels);
drawScale('mtm', mtmLevels);
drawCandles();
drawCurve('asi', asi, 'main');
drawCurve('asi', asiMa, 'average');
drawCurve('mtm', mtm, 'main');
drawCurve('mtm', mtmMa, 'average');
drawDates();
```
